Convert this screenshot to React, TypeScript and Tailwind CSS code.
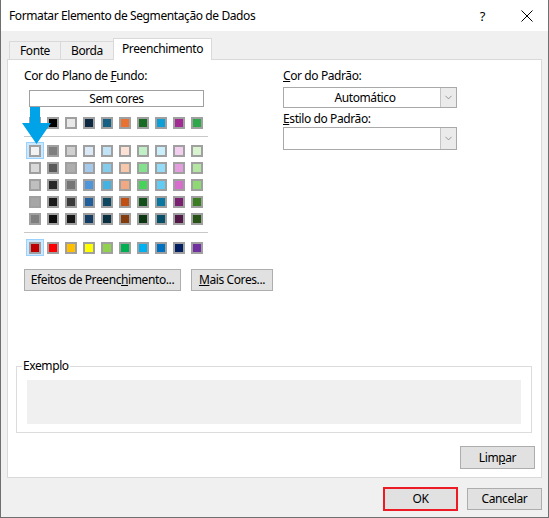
import { ChevronDown } from "lucide-react";

const themeTop = ["#ffffff", "#000000", "#e8e8e8", "#0e2841", "#156082", "#e97132", "#196b24", "#0f9ed5", "#a02b93", "#2ea84a"];

const themeShades = [
  ["#f2f2f2", "#7f7f7f", "#d0d0d0", "#dceaf7", "#c0e4f5", "#fbe2d5", "#c1f0c7", "#caeefb", "#f2ceef", "#d9f2d0"],
  ["#d9d9d9", "#595959", "#adadad", "#a6caec", "#83cceb", "#f7c7ac", "#83e28e", "#95dcf8", "#e59edd", "#b4e5a2"],
  ["#bfbfbf", "#262626", "#757575", "#4e95d9", "#44b3e1", "#f1a983", "#47d359", "#61cbf3", "#d86dcd", "#8ed973"],
  ["#a6a6a6", "#1a1a1a", "#3a3a3a", "#215f9a", "#0f4761", "#c04f15", "#124f1a", "#0b76a0", "#7a2070", "#3b7d23"],
  ["#7f7f7f", "#0d0d0d", "#171717", "#153d64", "#0a2f40", "#843c0c", "#0c3511", "#074f69", "#511848", "#275317"],
];

const standard = ["#c00000", "#ff0000", "#ffc000", "#ffff00", "#92d050", "#00b050", "#00b0f0", "#0070c0", "#002060", "#7030a0"];

function Swatch({ color, selected }: { color: string; selected?: boolean }) {
  return (
    <div
      className={
        selected
          ? "flex h-[17px] w-[18px] items-center justify-center border border-[#99d1ff] bg-[#cce8ff]"
          : "flex h-[17px] w-[18px] items-center justify-center"
      }
    >
      <div className="h-[12px] w-[12px] border-2 border-[#a0a0a0]" style={{ backgroundColor: color }} />
    </div>
  );
}

function SwatchRow({ colors, selectedIndex }: { colors: string[]; selectedIndex?: number }) {
  return (
    <div className="ml-[2px] grid w-[180px] grid-cols-10">
      {colors.map((c, i) => (
        <Swatch key={i} color={c} selected={i === selectedIndex} />
      ))}
    </div>
  );
}

function Combo({ value, height }: { value?: string; height: string }) {
  return (
    <div className={`flex w-[174px] border border-[#a9a9a9] bg-white ${height}`}>
      <div className="flex flex-1 items-center justify-center pl-[6px]">{value}</div>
      <div className="flex w-[16px] items-center justify-center border-l border-[#c4c4c4] bg-[#ebebeb]">
        <ChevronDown className="h-[11px] w-[11px] text-[#707070]" strokeWidth={1.5} />
      </div>
    </div>
  );
}

function WinButton({ children, className }: { children: React.ReactNode; className: string }) {
  return (
    <div className={`flex items-center justify-center border border-[#adadad] bg-[#e1e1e1] ${className}`}>{children}</div>
  );
}

export default function App() {
  return (
    <div className="h-[518px] w-[549px] border-x border-b border-[#6f6f6f] bg-[#f0f0f0] font-['Segoe_UI','Noto_Sans',sans-serif] text-[12px] leading-[16px] tracking-[-0.4px] text-black">
      <div className="flex h-[31px] items-center bg-white pl-[8px]">
        <span className="flex-1">Formatar Elemento de Segmentação de Dados</span>
        <span className="mr-[36px] text-[13px]">?</span>
        <svg className="mr-[15px]" width="12" height="12" viewBox="0 0 12 12">
          <path d="M0.5 0.5 L11.5 11.5 M11.5 0.5 L0.5 11.5" stroke="#000" strokeWidth="1" />
        </svg>
      </div>

      <div className="relative z-10 -mb-px ml-[8px] mt-[7px] flex items-end">
        <div className="flex h-[19px] w-[51px] items-center justify-center border-l border-t border-[#d9d9d9]">Fonte</div>
        <div className="flex h-[19px] w-[53px] items-center justify-center border-l border-t border-[#d9d9d9]">Borda</div>
        <div className="flex h-[22px] w-[99px] items-center justify-center border-x border-t border-[#d9d9d9] bg-white pb-[1px]">
          Preenchimento
        </div>
      </div>

      <div className="mx-[6px] flex h-[419px] flex-col border border-[#d9d9d9] bg-white">
        <div className="flex pt-[8px]">
          <div className="relative ml-[16px] w-[184px]">
            <div className="h-[16px]">
              Cor do Plano de <u>F</u>undo:
            </div>
            <div className="ml-[5px] mt-[6px] flex h-[17px] w-[175px] items-center justify-center border border-[#a0a0a0]">
              Sem cores
            </div>
            <div className="mt-[7px]">
              <SwatchRow colors={themeTop} />
            </div>
            <div className="mt-[5px] h-px w-full bg-[#c8c8c8]" />
            <div className="mt-[5px] flex flex-col">
              {themeShades.map((row, i) => (
                <SwatchRow key={i} colors={row} selectedIndex={i === 0 ? 0 : undefined} />
              ))}
            </div>
            <div className="mt-[5px] h-px w-full bg-[#c8c8c8]" />
            <div className="mt-[6px]">
              <SwatchRow colors={standard} selectedIndex={0} />
            </div>

            {/* blue pointer arrow drawn over the palette */}
            <svg className="absolute -left-[3px] top-[39px]" width="32" height="40" viewBox="0 0 32 40">
              <path d="M9 0 H19 V16 H30 L15.5 37 L1 16 H9 Z" fill="#00a2e8" />
            </svg>
          </div>

          <div className="ml-[75px] w-[174px]">
            <div className="h-[16px]">
              <u>C</u>or do Padrão:
            </div>
            <div className="mt-[3px]">
              <Combo value="Automático" height="h-[21px]" />
            </div>
            <div className="mt-[3px] h-[16px]">
              <u>E</u>stilo do Padrão:
            </div>
            <Combo height="h-[23px]" />
          </div>
        </div>

        <div className="ml-[16px] mt-[13px] flex gap-[10px]">
          <WinButton className="h-[22px] w-[157px]">
            <span>
              Efeitos de Preenc<u>h</u>imento...
            </span>
          </WinButton>
          <WinButton className="h-[22px] w-[82px]">
            <span>
              <u>M</u>ais Cores...
            </span>
          </WinButton>
        </div>

        <div className="relative ml-[8px] mt-[75px] h-[67px] w-[516px] border border-[#dcdcdc] px-[10px] pt-[13px]">
          <span className="absolute -top-[9px] left-[5px] bg-white px-px">Exemplo</span>
          <div className="h-[44px] w-full bg-[#f0f0f0]" />
        </div>

        <div className="mr-[6px] mt-[13px] flex justify-end">
          <WinButton className="h-[23px] w-[75px]">
            <span>
              Lim<u>p</u>ar
            </span>
          </WinButton>
        </div>
      </div>

      <div className="mr-[6px] mt-[9px] flex items-center justify-end gap-[9px]">
        <div className="flex h-[24px] w-[75px] items-center justify-center border-2 border-[#ed1c24] bg-[#e1e1e1]">OK</div>
        <WinButton className="h-[22px] w-[75px]">Cancelar</WinButton>
      </div>
    </div>
  );
}
